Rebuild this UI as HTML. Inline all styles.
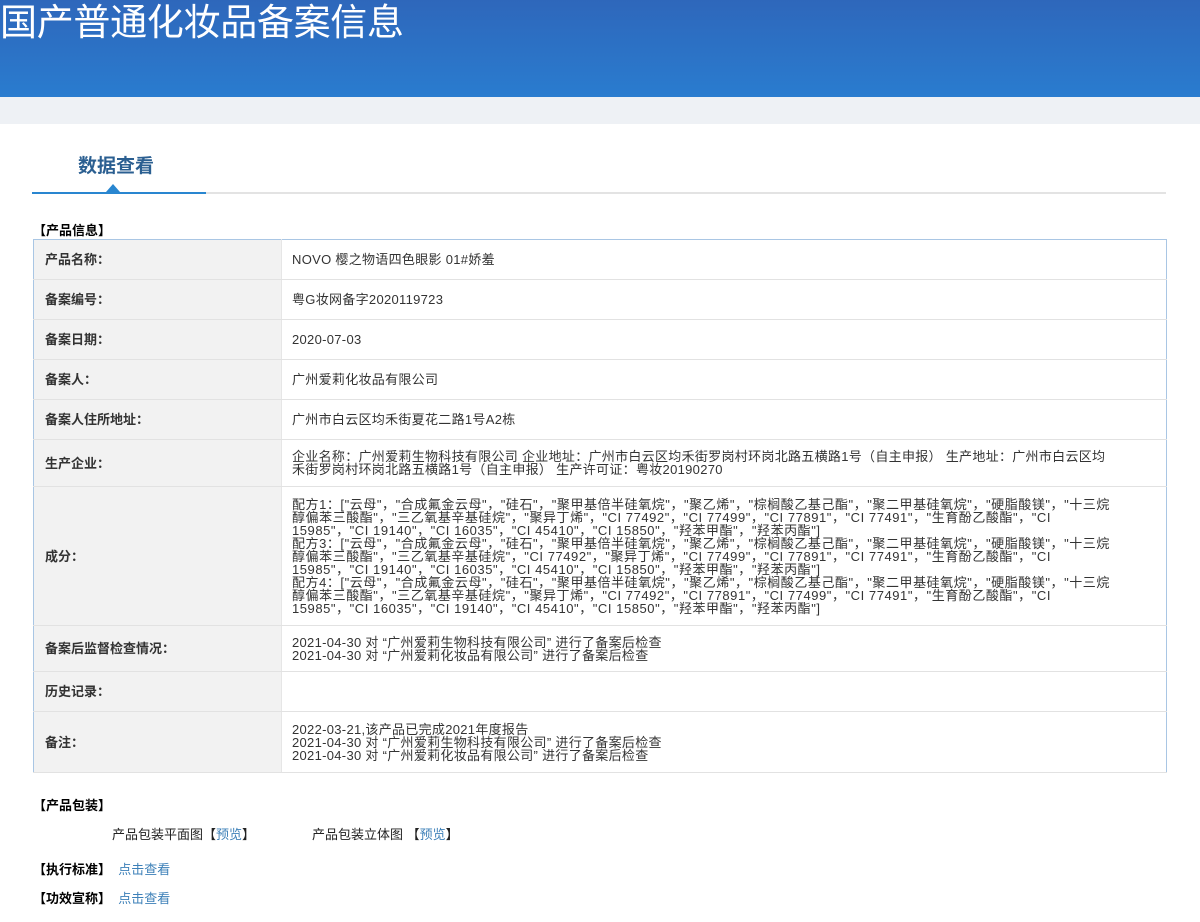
<!DOCTYPE html>
<html><head><meta charset="utf-8"><style>
*{margin:0;padding:0;box-sizing:border-box}
body{width:1200px;height:922px;background:#fff;font-family:"Liberation Sans","Noto Sans CJK SC","WenQuanYi Zen Hei",sans-serif;color:#333;font-size:13px;position:relative;overflow:hidden}
.hdr{position:absolute;left:0;top:0;width:1200px;height:97px;background:linear-gradient(180deg,#2e67bb 0%,#2a7ccf 100%);overflow:hidden}
.hdr h1{position:absolute;left:0;top:1px;color:#fff;font-weight:normal;font-size:37px;line-height:44px;letter-spacing:-0.3px}
.gray{position:absolute;left:0;top:97px;width:1200px;height:27px;background:#eef1f5}
.tab{position:absolute;left:78px;top:151px;font-size:19px;font-weight:bold;color:#2b5f91}
.line{position:absolute;left:32px;top:192px;width:1134px;height:2px;background:#e3e3e3}
.line b{position:absolute;left:0;top:0;width:174px;height:2px;background:#2986d0}
.tri{position:absolute;left:106px;top:184px;width:0;height:0;border-left:7px solid transparent;border-right:7px solid transparent;border-bottom:8px solid #2986d0}
.sec{position:absolute;left:33px;font-weight:bold;color:#000;font-size:13px}
table{position:absolute;left:33px;top:239px;width:1134px;border-collapse:collapse;border:1px solid #a9c6e4}
td{border-bottom:1px solid #e2e2e2;vertical-align:middle;font-size:13px;line-height:13px}
td.l{width:248px;background:#f2f2f2;padding-left:11px;font-weight:bold;color:#333;border-right:1px solid #e6e6e6}
td.v{padding-left:10px;white-space:nowrap;color:#333;letter-spacing:0.3px}
td.ing{letter-spacing:0.55px}
a{color:#3d80b8;text-decoration:none}
.p{position:absolute;font-size:13px;color:#222}
</style></head><body>
<div class="hdr"><h1>国产普通化妆品备案信息</h1></div>
<div class="gray"></div>
<div class="tab">数据查看</div>
<div class="line"><b></b></div>
<div class="tri"></div>
<div class="sec" style="top:220px">【产品信息】</div>
<table>
<tr style="height:40px"><td class="l">产品名称：</td><td class="v">NOVO 樱之物语四色眼影 01#娇羞</td></tr>
<tr style="height:40px"><td class="l">备案编号：</td><td class="v">粤G妆网备字2020119723</td></tr>
<tr style="height:40px"><td class="l">备案日期：</td><td class="v">2020-07-03</td></tr>
<tr style="height:40px"><td class="l">备案人：</td><td class="v">广州爱莉化妆品有限公司</td></tr>
<tr style="height:40px"><td class="l">备案人住所地址：</td><td class="v">广州市白云区均禾街夏花二路1号A2栋</td></tr>
<tr style="height:47px"><td class="l">生产企业：</td><td class="v">企业名称：广州爱莉生物科技有限公司 企业地址：广州市白云区均禾街罗岗村环岗北路五横路1号（自主申报） 生产地址：广州市白云区均<br>禾街罗岗村环岗北路五横路1号（自主申报） 生产许可证：粤妆20190270</td></tr>
<tr style="height:139px"><td class="l">成分：</td><td class="v ing">配方1：["云母"，"合成氟金云母"，"硅石"，"聚甲基倍半硅氧烷"，"聚乙烯"，"棕榈酸乙基己酯"，"聚二甲基硅氧烷"，"硬脂酸镁"，"十三烷<br>醇偏苯三酸酯"，"三乙氧基辛基硅烷"，"聚异丁烯"，"CI 77492"，"CI 77499"，"CI 77891"，"CI 77491"，"生育酚乙酸酯"，"CI<br>15985"，"CI 19140"，"CI 16035"，"CI 45410"，"CI 15850"，"羟苯甲酯"，"羟苯丙酯"]<br>配方3：["云母"，"合成氟金云母"，"硅石"，"聚甲基倍半硅氧烷"，"聚乙烯"，"棕榈酸乙基己酯"，"聚二甲基硅氧烷"，"硬脂酸镁"，"十三烷<br>醇偏苯三酸酯"，"三乙氧基辛基硅烷"，"CI 77492"，"聚异丁烯"，"CI 77499"，"CI 77891"，"CI 77491"，"生育酚乙酸酯"，"CI<br>15985"，"CI 19140"，"CI 16035"，"CI 45410"，"CI 15850"，"羟苯甲酯"，"羟苯丙酯"]<br>配方4：["云母"，"合成氟金云母"，"硅石"，"聚甲基倍半硅氧烷"，"聚乙烯"，"棕榈酸乙基己酯"，"聚二甲基硅氧烷"，"硬脂酸镁"，"十三烷<br>醇偏苯三酸酯"，"三乙氧基辛基硅烷"，"聚异丁烯"，"CI 77492"，"CI 77891"，"CI 77499"，"CI 77491"，"生育酚乙酸酯"，"CI<br>15985"，"CI 16035"，"CI 19140"，"CI 45410"，"CI 15850"，"羟苯甲酯"，"羟苯丙酯"]</td></tr>
<tr style="height:46px"><td class="l">备案后监督检查情况：</td><td class="v">2021-04-30 对 “广州爱莉生物科技有限公司” 进行了备案后检查<br>2021-04-30 对 “广州爱莉化妆品有限公司” 进行了备案后检查</td></tr>
<tr style="height:40px"><td class="l">历史记录：</td><td class="v"></td></tr>
<tr style="height:61px"><td class="l">备注：</td><td class="v">2022-03-21,该产品已完成2021年度报告<br>2021-04-30 对 “广州爱莉生物科技有限公司” 进行了备案后检查<br>2021-04-30 对 “广州爱莉化妆品有限公司” 进行了备案后检查</td></tr>
</table>
<div class="sec" style="top:795px">【产品包装】</div>
<div class="p" style="left:112px;top:824px">产品包装平面图【<a>预览</a>】</div>
<div class="p" style="left:312px;top:824px">产品包装立体图 【<a>预览</a>】</div>
<div class="sec" style="top:859px">【执行标准】&nbsp;&nbsp;<a style="font-weight:normal">点击查看</a></div>
<div class="sec" style="top:888px">【功效宣称】&nbsp;&nbsp;<a style="font-weight:normal">点击查看</a></div>
</body></html>
